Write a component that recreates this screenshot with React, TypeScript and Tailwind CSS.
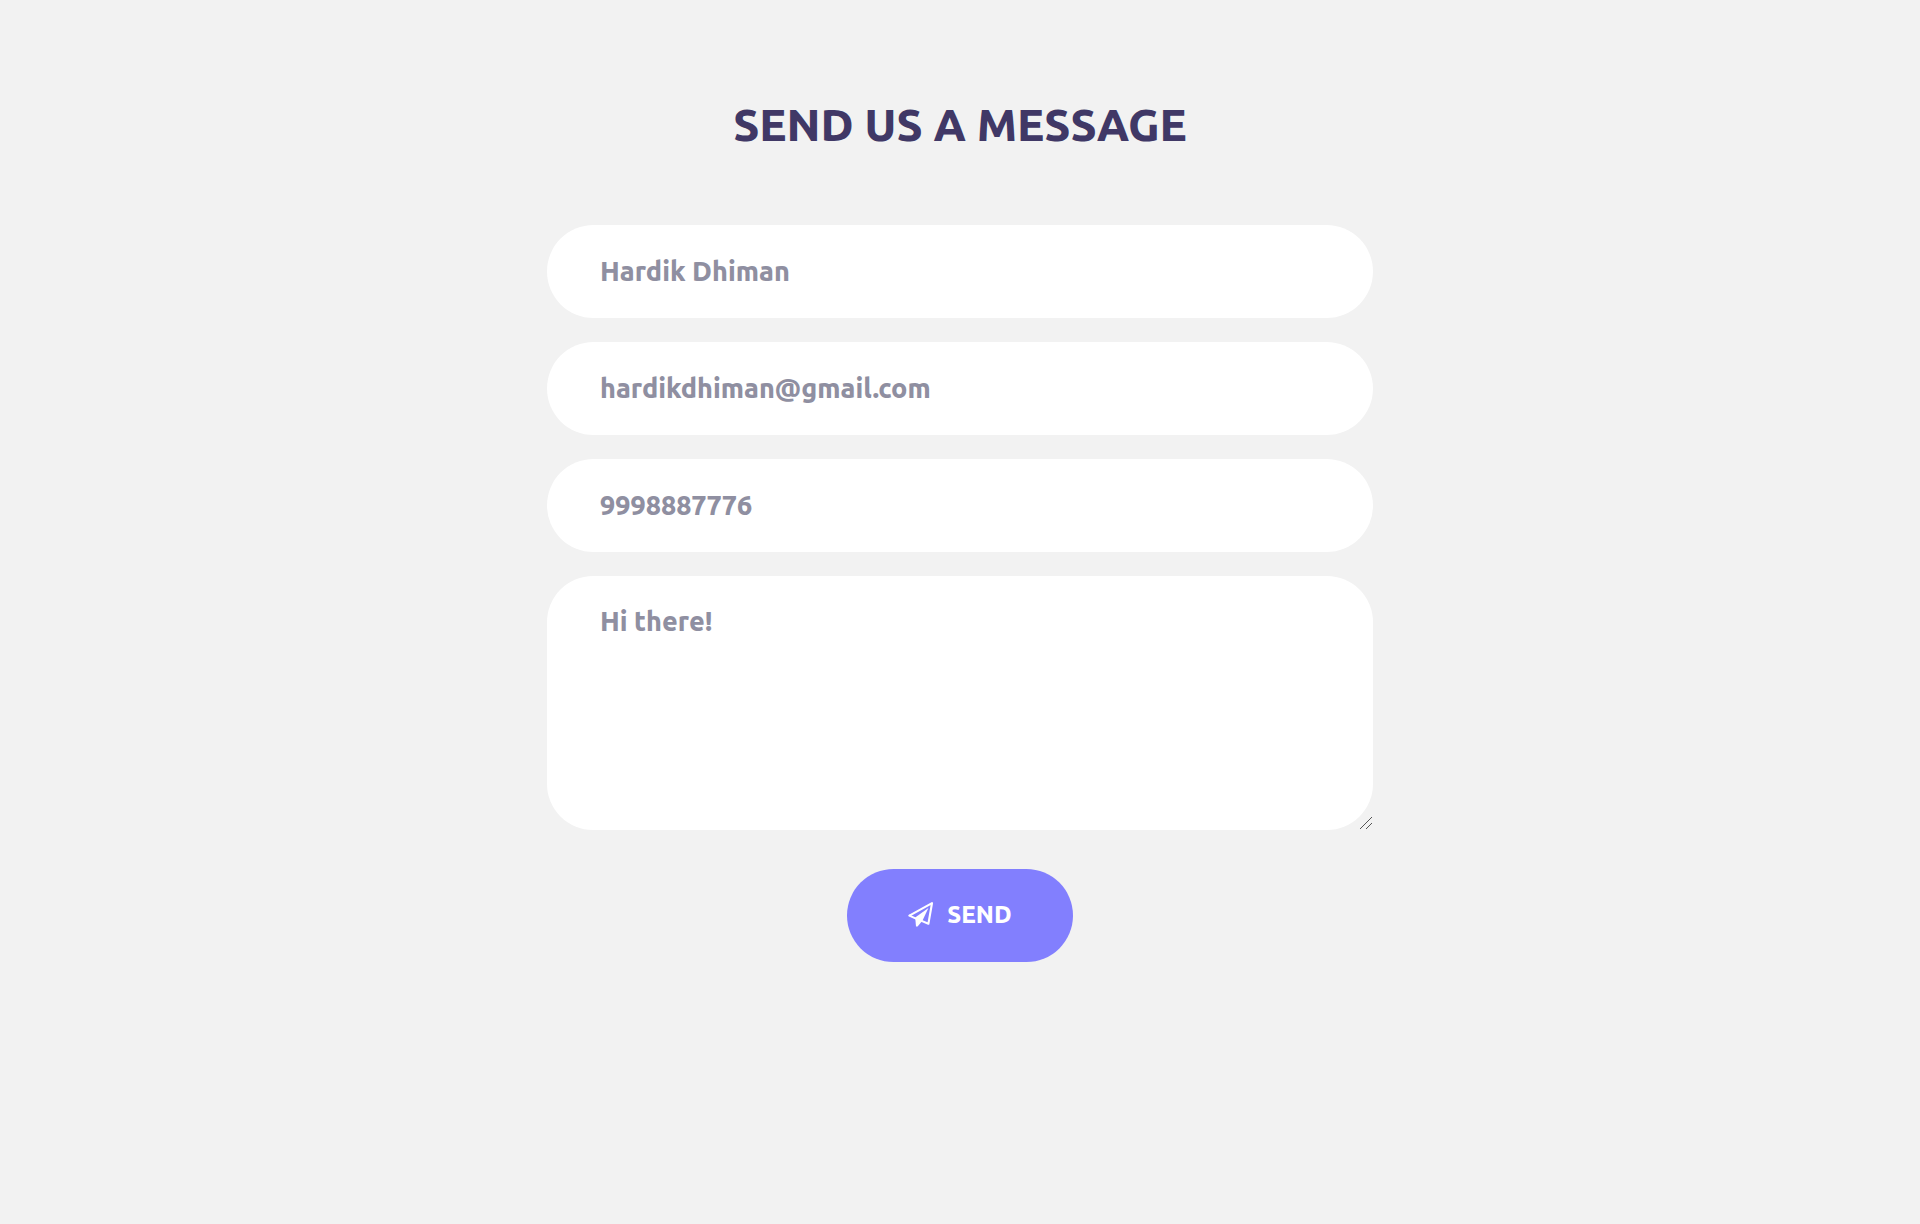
import React from "react";

const fieldClass =
  "block w-full border-0 bg-white px-[53px] text-[27px] leading-8 font-extrabold text-[#8f8fa1] outline-none";

function PaperPlaneIcon() {
  return (
    <svg viewBox="0 0 26 26" className="size-[26px] shrink-0" fill="none" aria-hidden="true">
      <path
        d="M1.4 13.6 24 1.2 20.4 21.8 12.4 18.4 M1.4 13.6 8 16.6"
        stroke="currentColor"
        strokeWidth="2.1"
        strokeLinejoin="round"
        strokeLinecap="round"
      />
      <path d="M20.4 6 7.2 15.6 8 24.6 9.6 24.6 14.4 18.8Z" fill="currentColor" />
    </svg>
  );
}

function ResizeGrip() {
  return (
    <svg
      viewBox="0 0 14 14"
      className="pointer-events-none absolute right-0 bottom-0 size-3.5"
      fill="none"
      stroke="#555"
      aria-hidden="true"
    >
      <path d="M1 13 13 1 M7 13 13 7" />
    </svg>
  );
}

export default function App() {
  return (
    <main className="min-h-screen bg-[#f2f2f2] px-4 pt-[95px] pb-24 font-['Ubuntu','Noto_Sans',sans-serif]">
      <form
        className="mx-auto flex w-full max-w-[826px] flex-col items-center"
        onSubmit={(event) => event.preventDefault()}
      >
        <h1 className="mb-[70px] text-center text-[45px] leading-[60px] font-extrabold text-[#403866]">
          SEND US A MESSAGE
        </h1>
        <div className="flex w-full flex-col gap-6">
          <input
            className={`${fieldClass} h-[93px] rounded-full pb-0.5`}
            type="text"
            name="name"
            aria-label="Full name"
            defaultValue="Hardik Dhiman"
          />
          <input
            className={`${fieldClass} h-[93px] rounded-full pb-0.5`}
            type="email"
            name="email"
            aria-label="Email"
            defaultValue="hardikdhiman@gmail.com"
          />
          <input
            className={`${fieldClass} h-[93px] rounded-full pb-0.5`}
            type="tel"
            name="phone"
            aria-label="Phone"
            defaultValue="9998887776"
          />
          <div className="relative">
            <textarea
              className={`${fieldClass} h-[254px] resize-none rounded-[46px] py-[29px]`}
              name="message"
              aria-label="Message"
              defaultValue="Hi there!"
            />
            <ResizeGrip />
          </div>
        </div>
        <button
          type="submit"
          className="mt-[39px] flex h-[93px] w-[226px] items-center justify-center gap-[13px] rounded-full bg-[#827ffe] pb-0.5 text-2xl font-extrabold text-white"
        >
          <PaperPlaneIcon />
          SEND
        </button>
      </form>
    </main>
  );
}
